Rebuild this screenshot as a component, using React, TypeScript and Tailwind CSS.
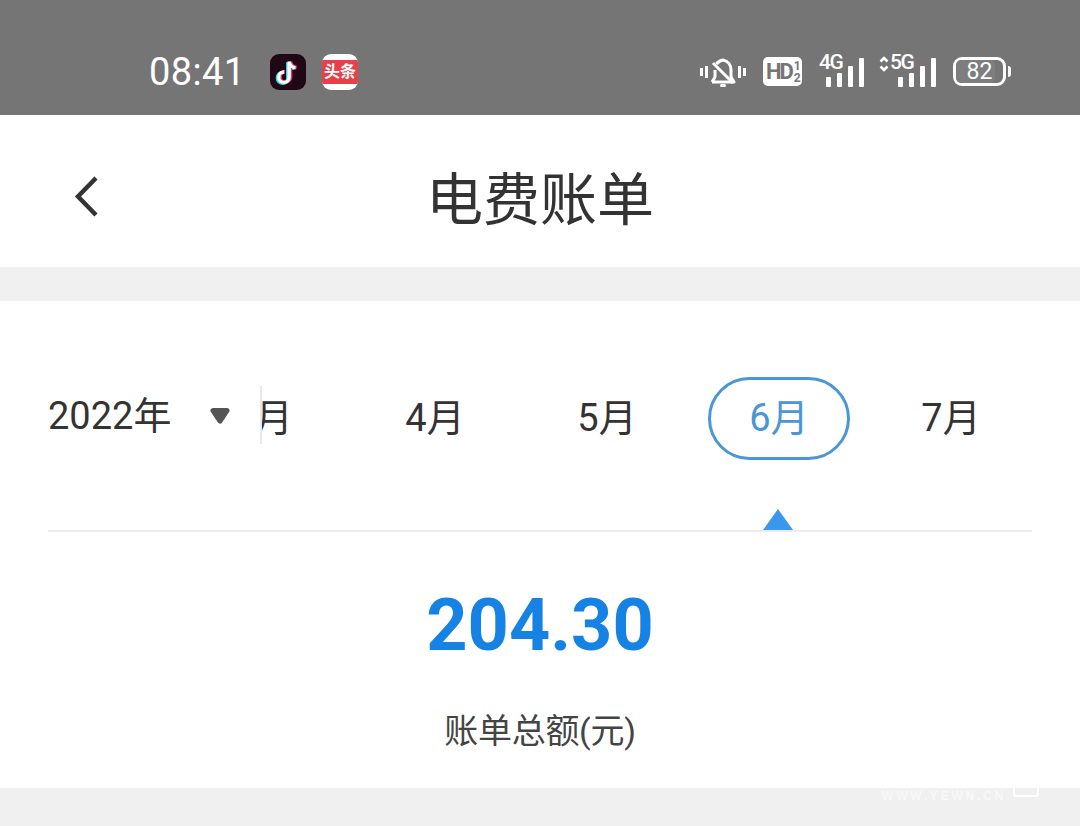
import React from "react";

const FONT = "font-['Roboto','Noto_Sans_CJK_SC',sans-serif]";

function Bars({ x = 0 }: { x?: number }) {
  return (
    <>
      <rect x={x} y="19" width="5" height="10" rx="1" />
      <rect x={x + 11} y="15" width="5" height="14" rx="1" />
      <rect x={x + 22} y="8" width="5" height="21" rx="1" />
      <rect x={x + 33} y="0" width="5" height="29" rx="1" />
    </>
  );
}

function MuteBell() {
  return (
    <svg width="46" height="32" viewBox="0 0 46 32" fill="none" className="shrink-0">
      <g fill="#fff">
        <rect x="0" y="12" width="3" height="8" />
        <rect x="5" y="10" width="3" height="12" />
        <rect x="38" y="10" width="3" height="12" />
        <rect x="43" y="12" width="3" height="8" />
        <rect x="20" y="28" width="6" height="3" rx="1.5" />
      </g>
      <path
        d="M12 26h22l-3-5v-7c0-5-3-9-8-10-3 .5-5 2-6.500 4M15 14v7l-3 5"
        stroke="#fff"
        strokeWidth="3"
        strokeLinejoin="round"
      />
      <path d="M13 7 33 27" stroke="#fff" strokeWidth="3" />
    </svg>
  );
}

function TikTok() {
  return (
    <div className="w-9 h-9 rounded-[9px] bg-[#1f0716] flex items-center justify-center">
      <svg width="28" height="30" viewBox="0 0 24 26" fill="none">
        <path d="M13 4v13.500a4.500 4.500 0 1 1-4.500-4.500M13 4c.4 3 2.600 5 5.500 5.300" stroke="#27e0e8" strokeWidth="3.400" transform="translate(-1 .6)" />
        <path d="M13 4v13.500a4.500 4.500 0 1 1-4.500-4.500M13 4c.4 3 2.600 5 5.500 5.300" stroke="#f0306a" strokeWidth="3.400" transform="translate(1 -.2)" />
        <path d="M13 4v13.500a4.500 4.500 0 1 1-4.500-4.500M13 4c.4 3 2.600 5 5.500 5.300" stroke="#fff" strokeWidth="3" />
      </svg>
    </div>
  );
}

function Toutiao() {
  return (
    <div className="w-9 h-9 rounded-[9px] bg-white flex items-center overflow-hidden">
      <div className="w-full h-[24px] bg-[#e8404a] flex items-center justify-center text-white text-[16px] leading-none font-bold whitespace-nowrap">
        头条
      </div>
    </div>
  );
}

function Month({ label, active }: { label: string; active?: boolean }) {
  return (
    <div className="w-[172px] shrink-0 flex justify-center">
      <div
        className={
          "w-[142px] h-[83px] rounded-full flex items-center justify-center text-[38px] leading-none border-[3px] pb-[2px] " +
          (active ? "border-[#4a96d6] text-[#4a96d6]" : "border-transparent text-[#333333]")
        }
      >
        {label}
      </div>
    </div>
  );
}

export default function App() {
  return (
    <div className={`w-[1080px] h-[826px] overflow-hidden bg-[#f0f0f0] flex flex-col relative ${FONT}`}>
      {/* Status bar */}
      <div className="h-[115px] shrink-0 bg-[#757575] flex items-center pl-[150px] pr-[68px] pt-[28px] text-white">
        <span className="text-[38px] leading-none tracking-[0.4px] w-[120px] -ml-[1px] mr-[1px]">08:41</span>
        <div className="flex gap-4 items-center">
          <TikTok />
          <Toutiao />
        </div>
        <div className="ml-auto flex items-center -translate-x-[1px]">
          <MuteBell />
          <div className="ml-[17px] w-[39px] h-[29px] rounded-[5px] bg-white flex items-center pl-[3px] text-[#757575] font-bold overflow-hidden">
            <span className="text-[22px] leading-none tracking-[-2px]">HD</span>
            <span className="flex flex-col items-center text-[12px] leading-[12px] ml-[2px]">
              <span>1</span>
              <span>2</span>
            </span>
          </div>
          <div className="ml-[18px] relative w-[44px] h-[33px]">
            <svg width="44" height="33" viewBox="0 0 44 33" fill="#fff" className="absolute left-0 top-0">
              <g transform="translate(6 3)"><Bars /></g>
            </svg>
            <span className="absolute -left-[1px] -top-[3px] text-[21px] leading-none font-medium tracking-[-1.500px]">4G</span>
          </div>
          <div className="ml-[15px] relative w-[57px] h-[33px]">
            <svg width="57" height="33" viewBox="0 0 57 33" fill="none" className="absolute left-0 top-0">
              <path d="M1.500 6.500 5 3l3.500 3.500M1.500 11.500 5 15l3.500-3.500" stroke="#fff" strokeWidth="2.600" />
              <g transform="translate(19 3)" fill="#fff"><Bars /></g>
            </svg>
            <span className="absolute left-[11px] -top-[3px] text-[21px] leading-none font-medium tracking-[-1.500px]">5G</span>
          </div>
          <div className="ml-[17px] relative w-[53px] h-[29px] rounded-[9px] border-[3px] border-white flex items-center justify-center text-[23px] leading-none">
            <span className="absolute left-0 top-0 bottom-0 w-[82%] bg-[#7e7e7e] rounded-[5px]" />
            <span className="relative">82</span>
          </div>
          <div className="ml-[2px] w-[3px] h-[11px] bg-white rounded-r-sm" />
        </div>
      </div>

      {/* Title bar */}
      <div className="h-[152px] shrink-0 bg-white flex items-center justify-center relative">
        <svg width="28" height="44" viewBox="0 0 28 44" fill="none" className="absolute left-[74px] top-[59px]">
          <path d="M22 4 4 22.500 22 41" stroke="#333" strokeWidth="4.500" />
        </svg>
        <h1 className="text-[57px] leading-none font-normal text-[#333333] mt-[18px]">电费账单</h1>
      </div>

      {/* Card */}
      <div className="mt-[34px] h-[487px] bg-white px-[48px] flex flex-col">
        <div className="mt-[76px] flex items-center h-[83px]">
          <span className="w-[160px] shrink-0 text-[38px] leading-none text-[#333333] -translate-y-[3px]">2022年</span>
          <svg width="24" height="20" viewBox="0 0 24 20" className="shrink-0 -translate-y-[3px]">
            <path d="M5 4.500h14L12 15z" fill="#555" stroke="#555" strokeWidth="5" strokeLinejoin="round" />
          </svg>
          <div className="ml-[28px] flex-1 min-w-0 relative h-[83px]">
            <div className="overflow-hidden h-[83px] flex items-center">
              <div className="ml-[-83px] flex shrink-0 items-center">
                <Month label="3月" />
                <Month label="4月" />
                <Month label="5月" />
                <Month label="6月" active />
                <Month label="7月" />
              </div>
            </div>
            <div className="absolute left-0 top-[9px] w-[2px] h-[58px] bg-[#e8e8e8]" />
          </div>
        </div>

        <div className="mt-[70px] relative h-[2px] bg-[#ececec] shrink-0">
          <svg width="32" height="21" viewBox="0 0 32 21" className="absolute left-[714px] -top-[21px]">
            <path d="M16 0 31 21H1z" fill="#3b96ee" />
          </svg>
        </div>

        <div className="mt-[58px] text-center text-[72px] leading-none font-bold text-[#1683e4]">204.30</div>
        <div className="mt-[52px] text-center text-[34px] leading-none tracking-[-0.300px] text-[#444444]">账单总额(元)</div>
      </div>

      <span className="absolute left-[882px] top-[790px] text-[12px] leading-none font-bold tracking-[2.800px] text-[#f8f8f8] font-['Liberation_Sans',sans-serif]">WWW.YEWN.CN</span>
      <div className="absolute left-[1013px] top-[760px] w-[26px] h-[37px] rounded-[3px] border-2 border-white" />
    </div>
  );
}
